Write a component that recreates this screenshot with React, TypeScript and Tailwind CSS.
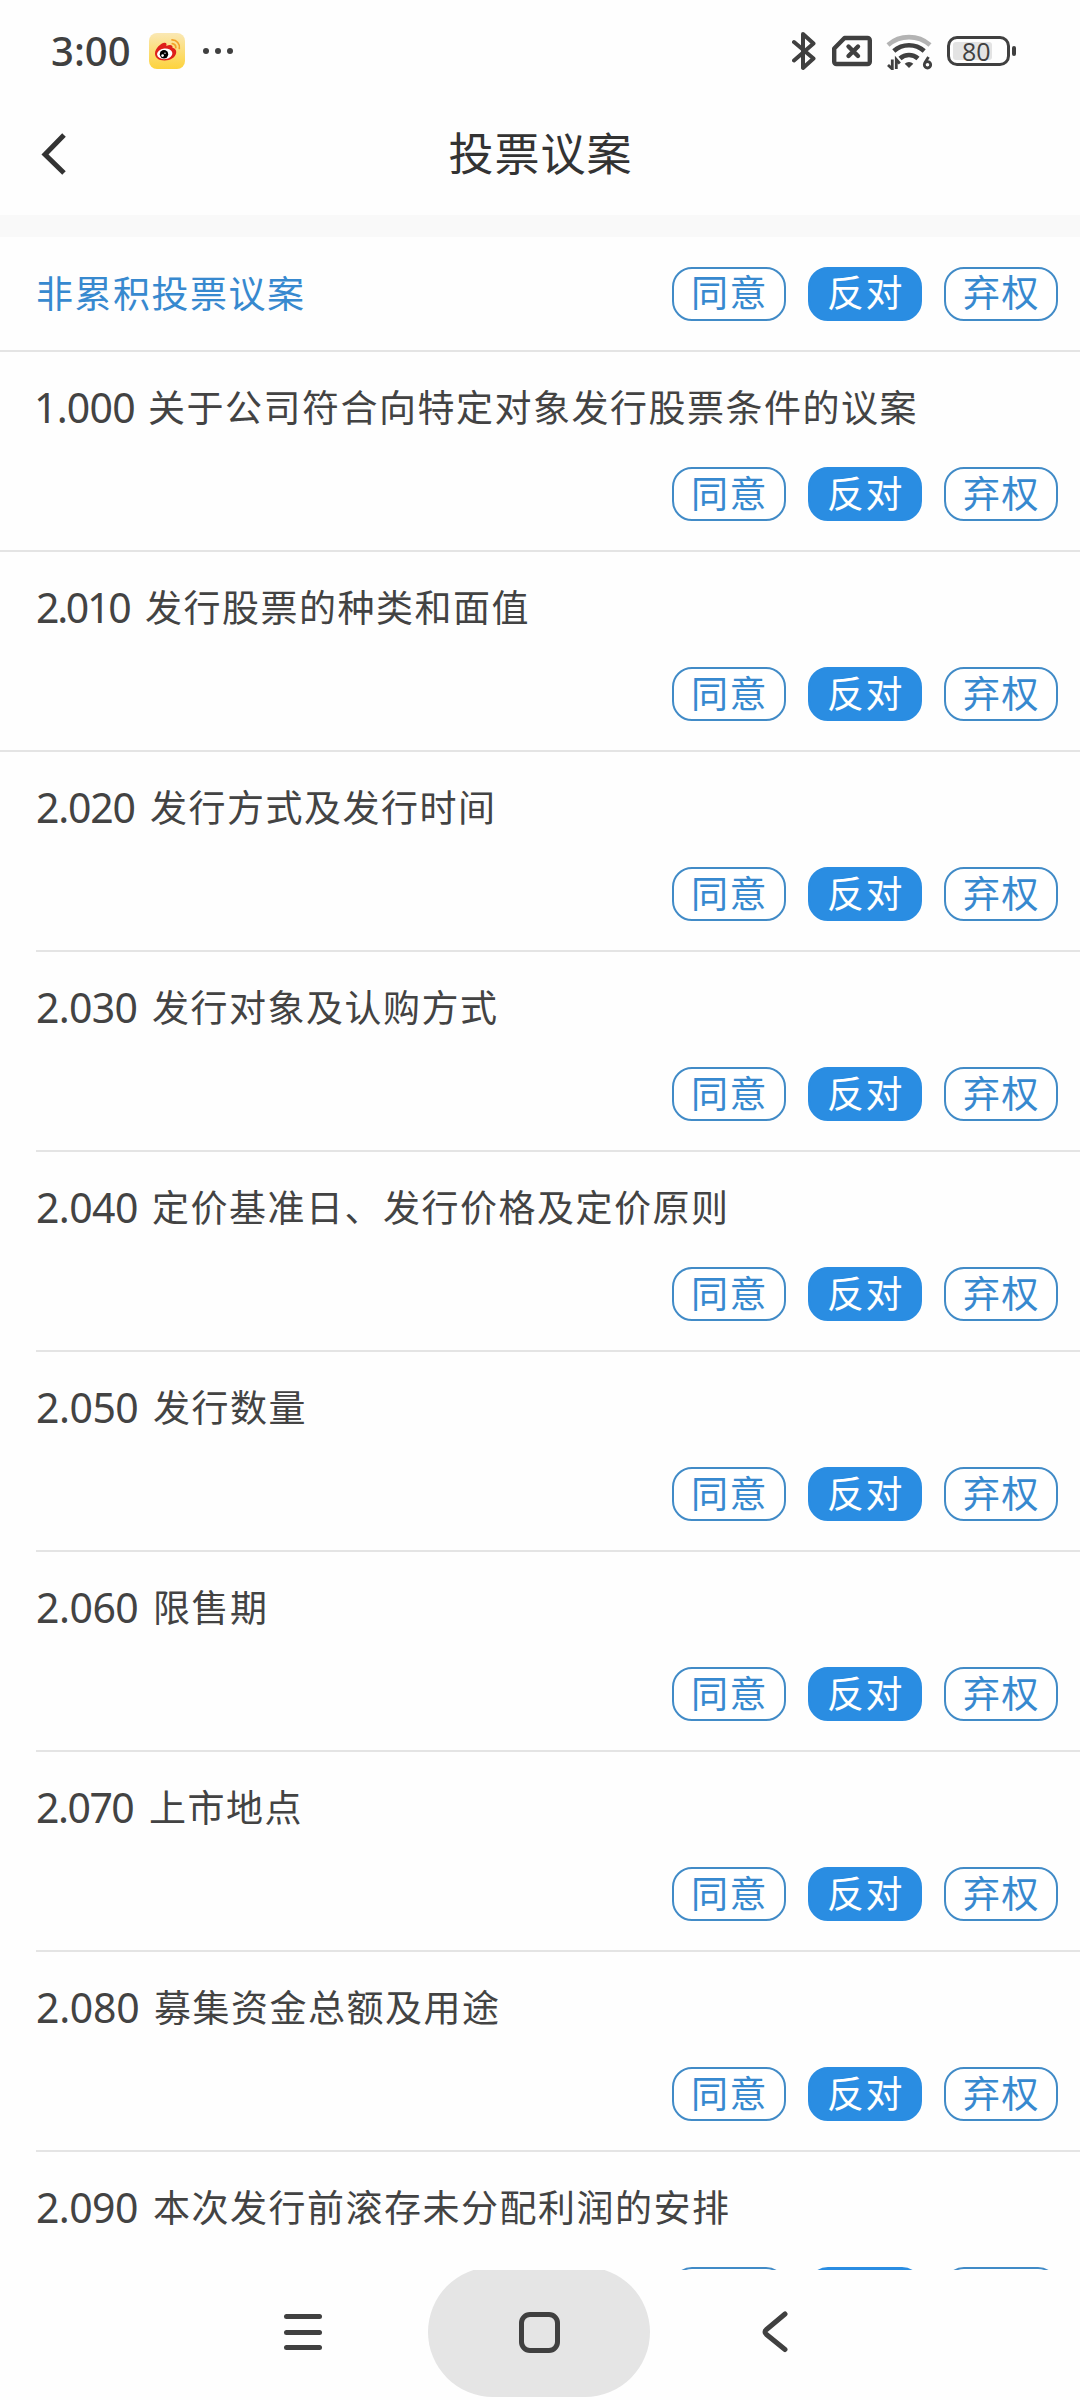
import type { ReactNode } from "react";
import clsx from "clsx";

type Choice = "同意" | "反对" | "弃权";

const CHOICES: Choice[] = ["同意", "反对", "弃权"];

interface Proposal {
  code: string;
  title: string;
  codeClass: string;
  fullLine?: boolean;
}

const PROPOSALS: Proposal[] = [
  { code: "1.000", title: "关于公司符合向特定对象发行股票条件的议案", codeClass: "w-[112px] -ml-[2px] mr-[2px] tracking-[-0.8px]", fullLine: true },
  { code: "2.010", title: "发行股票的种类和面值", codeClass: "w-[109px] tracking-[-2.3px]", fullLine: true },
  { code: "2.020", title: "发行方式及发行时间", codeClass: "w-[114px] tracking-[-1.2px]" },
  { code: "2.030", title: "发行对象及认购方式", codeClass: "w-[116px] tracking-[-0.7px]" },
  { code: "2.040", title: "定价基准日、发行价格及定价原则", codeClass: "w-[116px] tracking-[-0.6px]" },
  { code: "2.050", title: "发行数量", codeClass: "w-[117px] tracking-[-0.5px]" },
  { code: "2.060", title: "限售期", codeClass: "w-[117px] tracking-[-0.5px]" },
  { code: "2.070", title: "上市地点", codeClass: "w-[113px] tracking-[-1.5px]" },
  { code: "2.080", title: "募集资金总额及用途", codeClass: "w-[118px] tracking-[-0.3px]" },
  { code: "2.090", title: "本次发行前滚存未分配利润的安排", codeClass: "w-[117px] tracking-[-0.6px]" },
];

function WeiboIcon(): ReactNode {
  return (
    <svg viewBox="0 0 36 36" className="h-9 w-9">
      <defs>
        <linearGradient id="weibo-bg" x1="0" y1="0" x2="0" y2="1">
          <stop offset="0" stopColor="#fae8b4" />
          <stop offset="1" stopColor="#fdd33c" />
        </linearGradient>
      </defs>
      <rect width="36" height="36" rx="8" fill="url(#weibo-bg)" />
      <path
        d="M6 20.500C6 15.500 12 10 15.500 9.800c2.200-.1 2.300 1.600 1.800 3.200 3.200-1.500 6.700-1.400 6.200 1.800 3 .8 4 2.700 3.700 5C26.700 24.300 21.500 27.500 15.500 27.500S6 24.700 6 20.500z"
        fill="#de1f1b"
      />
      <ellipse cx="15.7" cy="20.8" rx="7.7" ry="5.3" fill="#fff" transform="rotate(-6 15.7 20.8)" />
      <circle cx="15" cy="21.3" r="4.2" fill="#000" />
      <circle cx="13.6" cy="22.6" r="1.3" fill="#fff" />
      <circle cx="16" cy="20.3" r=".7" fill="#fff" />
      <path d="M23 6.900a7.200 7.200 0 0 1 7.300 8.600M23.300 10.600a3.600 3.600 0 0 1 3.500 4" fill="none" stroke="#f3a12a" strokeWidth="1.7" strokeLinecap="round" />
    </svg>
  );
}

function StatusIcons(): ReactNode {
  return (
    <div className="flex items-center text-[#404040]">
      <svg viewBox="0 0 24 40" className="h-10 w-6 fill-none stroke-current" strokeWidth={4} strokeLinecap="round" strokeLinejoin="round">
        <path d="M2 11 21.500 27.500 11 37V3L21.500 12.500 2 29.500" />
      </svg>
      <svg viewBox="0 0 40 32" className="ml-4 h-8 w-10 fill-none stroke-current" strokeWidth={4.4} strokeLinejoin="round">
        <path d="M12.500 3H35.500a2.300 2.300 0 0 1 2.300 2.300V26.700a2.300 2.300 0 0 1-2.300 2.300H4.500A2.300 2.300 0 0 1 2.200 26.700V13.500z" />
        <path d="m16.500 11.500 9.500 9.500m0-9.500-9.500 9.500" strokeLinecap="round" />
      </svg>
      <svg viewBox="0 0 48 38" className="ml-[14px] h-[38px] w-12 fill-none stroke-current" strokeWidth={4.6}>
        <path d="M2 13a32 32 0 0 1 42 0" className="stroke-[#b3b3b3]" />
        <path d="M7.800 19a23 23 0 0 1 30.400 0M14 26.500a13.500 13.500 0 0 1 18 0" />
        <path d="M23 36l-4.300-4.300a6 6 0 0 1 8.600 0z" className="fill-current stroke-none" />
        <path d="M6.300 27.500v9.500L2 33M10.300 37V27.500l3.500 4" strokeWidth={2.8} />
        <path d="M42.500 25 38.700 31" strokeWidth={2.8} />
        <circle cx="41.500" cy="32.800" r="3.200" strokeWidth={2.8} />
      </svg>
      <div className="ml-[13px] flex items-center">
        <div className="flex h-[30px] w-[63px] rounded-[10px] border-[3px] border-[#404040] p-[3px]">
          <div className="relative h-full w-[39px] rounded-[3px] bg-[#e3e3e3]">
            <span className="absolute top-1/2 left-[9px] -translate-y-1/2 font-['Open_Sans','Noto_Sans'] text-[25px] leading-none">
              80
            </span>
          </div>
        </div>
        <div className="ml-[2px] h-[10px] w-1 rounded-[2px] bg-[#404040]" />
      </div>
    </div>
  );
}

function VoteButtons(): ReactNode {
  return (
    <div className="flex gap-[22px]">
      {CHOICES.map((choice) => (
        <button
          key={choice}
          className={clsx(
            "flex h-[54px] w-[114px] items-center justify-center rounded-[20px] border-2 pb-[2px] pl-px text-[37px] leading-none tracking-[1.5px] whitespace-nowrap",
            choice === "反对"
              ? "border-[#2a8de2] bg-[#2a8de2] text-white"
              : "border-[#418bc7] bg-white text-[#3789cf]",
          )}
        >
          {choice}
        </button>
      ))}
    </div>
  );
}

function ProposalRow({ code, title, codeClass, fullLine }: Proposal): ReactNode {
  return (
    <li className="h-[200px] shrink-0">
      <div className="flex h-[115px] items-center pb-[4px] pl-9 text-[37px] text-[#434343]">
        <span className={clsx("shrink-0 text-[41px]", codeClass)}>{code}</span>
        <span className="tracking-[1.5px] whitespace-nowrap">{title}</span>
      </div>
      <div className="flex h-[83px] justify-end pr-[22px]">
        <VoteButtons />
      </div>
      <div className={clsx("h-[2px] bg-[#e4e4e4]", !fullLine && "ml-9")} />
    </li>
  );
}

export default function App(): ReactNode {
  return (
    <div className="flex h-[2400px] w-[1080px] flex-col overflow-hidden bg-[#fefefe] font-['Noto_Sans','Noto_Sans_CJK_SC',sans-serif]">
      {/* Status bar */}
      <div className="flex h-[102px] shrink-0 items-center justify-between pr-[64px] pl-[51px]">
        <div className="flex items-center">
          <span className="w-[98px] text-[40px] font-medium text-[#404040]">3:00</span>
          <WeiboIcon />
          <div className="ml-[18px] flex gap-[6px]">
            <i className="h-[6px] w-[6px] rounded-full bg-[#404040]" />
            <i className="h-[6px] w-[6px] rounded-full bg-[#404040]" />
            <i className="h-[6px] w-[6px] rounded-full bg-[#404040]" />
          </div>
        </div>
        <StatusIcons />
      </div>

      {/* Title bar */}
      <header className="grid h-[113px] shrink-0 grid-cols-[1fr_auto_1fr] items-center pb-[9px]">
        <svg viewBox="0 0 26 42" className="ml-[41px] h-[42px] w-[26px] fill-none stroke-[#333]" strokeWidth={5}>
          <path d="M23 2 4 21.500 23 40" />
        </svg>
        <h1 className="pl-px text-[45px] tracking-[1px] text-[#333]">投票议案</h1>
      </header>
      <div className="h-[22px] shrink-0 bg-[#f9f9f9]" />

      {/* Proposals */}
      <main className="flex min-h-0 flex-1 flex-col overflow-hidden">
        <div className="flex h-[115px] shrink-0 items-center justify-between border-b-2 border-[#e4e4e4] pr-[22px] pl-9">
          <h2 className="text-[37px] tracking-[1.5px] text-[#3789cf]">非累积投票议案</h2>
          <VoteButtons />
        </div>
        <ul className="flex flex-col">
          {PROPOSALS.map((proposal) => (
            <ProposalRow key={proposal.code} {...proposal} />
          ))}
        </ul>
      </main>

      {/* System navigation */}
      <nav className="flex h-[130px] shrink-0 items-start overflow-hidden pl-[284px]">
        <div className="mt-11 flex h-9 w-[38px] flex-col justify-between">
          <i className="h-[5px] rounded-full bg-[#404040]" />
          <i className="h-[5px] rounded-full bg-[#404040]" />
          <i className="h-[5px] rounded-full bg-[#404040]" />
        </div>
        <div className="-mt-[3px] ml-[106px] flex h-[130px] w-[222px] items-center justify-center rounded-[65px] bg-[#e5e5e5]">
          <div className="h-[41px] w-[41px] rounded-[11px] border-[5px] border-[#404040]" />
        </div>
        <svg viewBox="0 0 26 42" className="mt-[41px] ml-[112px] h-[42px] w-[26px] fill-none stroke-[#404040]" strokeWidth={5} strokeLinecap="round">
          <path d="M23 3 4.500 18.500q-3 2.500 0 5L23 38.500" />
        </svg>
      </nav>
    </div>
  );
}
